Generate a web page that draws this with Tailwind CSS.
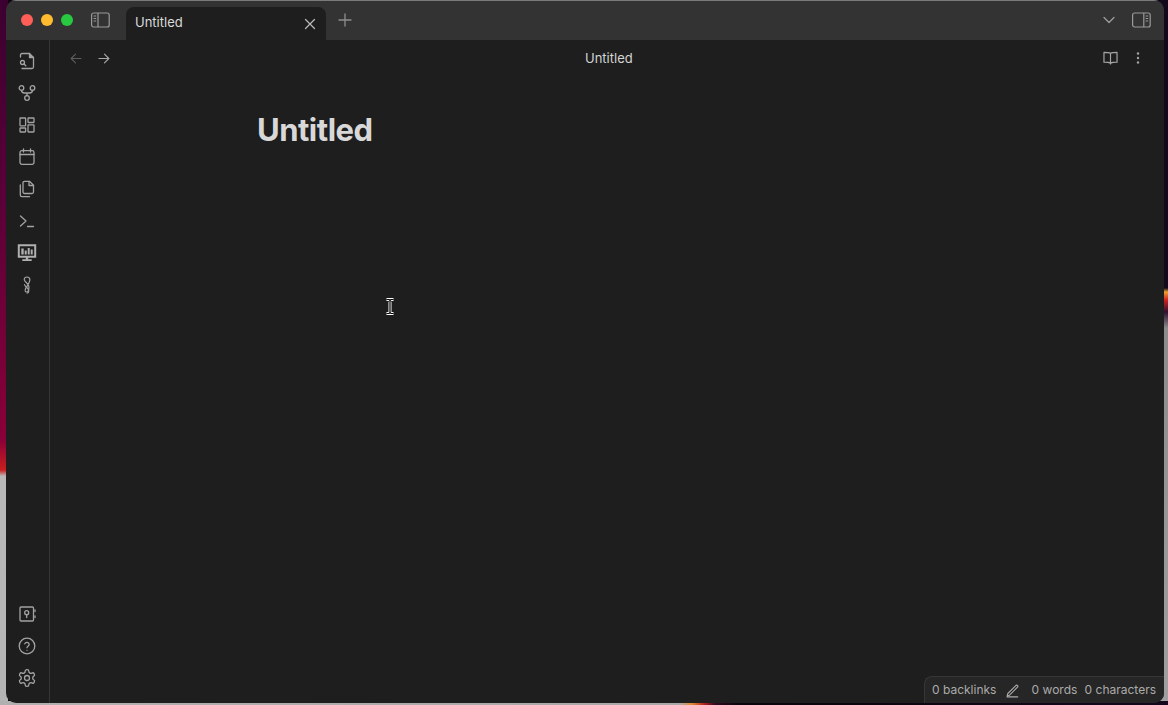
<!DOCTYPE html>
<html lang="en">
<head>
  <meta charset="UTF-8">
  <title>Untitled</title>
  <script src="https://cdn.jsdelivr.net/npm/@tailwindcss/browser@4"></script>
</head>
<body class="relative w-[1168px] h-[705px] overflow-hidden bg-[#0d0610] font-['Inter','Liberation_Sans',sans-serif]">
  <!-- wallpaper slivers around the window -->
  <div class="absolute left-0 top-0 w-[8px] h-[705px] bg-[linear-gradient(to_bottom,#3c0030_0px,#5a0038_200px,#8a0038_440px,#c81e1e_470px,#b9b9b9_476px,#b4b4b4_705px)]"></div>
  <div class="absolute right-0 top-0 w-[8px] h-[705px] bg-[linear-gradient(to_bottom,#14081c_0px,#14081c_288px,#f0a030_292px,#d02020_300px,#301030_312px,#8c8c8c_328px,#a0a0a0_705px)]"></div>
  <div class="absolute left-0 bottom-0 w-[1168px] h-[4px] bg-[linear-gradient(to_right,#b0b0b0_0px,#a8a8a8_680px,#e08a30_692px,#b01c20_705px,#300a20_715px,#08040c_740px,#14081c_1168px)]"></div>

  <!-- app window -->
  <div class="absolute left-[6px] top-0 w-[1158px] h-[703px] rounded-[10px] overflow-hidden flex flex-col bg-[#1e1e1e] text-[#dadada]">
    <!-- title bar -->
    <div class="h-[40px] shrink-0 flex bg-[#333333] border-t border-[#7a7a7a]">
      <div class="flex items-center gap-[8px] pl-[15px] w-[80px] h-[39px] pb-[1px]">
        <span class="w-[12px] h-[12px] rounded-full bg-[#ff5f57]"></span>
        <span class="w-[12px] h-[12px] rounded-full bg-[#febc2e]"></span>
        <span class="w-[12px] h-[12px] rounded-full bg-[#28c840]"></span>
      </div>
      <div class="w-[40px] h-[39px] flex items-center pb-[1px] pl-[5px]">
        <svg class="w-[19px] h-[16px] text-[#9a9a9a]" viewBox="0 0 19 16" fill="none" stroke="currentColor" stroke-width="1.2">
          <rect x="0.6" y="1" width="17.6" height="14" rx="2"/>
          <path d="M7 1v14M2.6 4h2.6M2.6 6.5h2.6M2.6 9h2.6"/>
        </svg>
      </div>
      <!-- active tab -->
      <div class="mt-[6px] w-[200px] h-[33px] bg-[#1e1e1e] rounded-t-[8px] flex items-center justify-between pl-[9px] pr-[10px]">
        <span class="text-[13px] text-[#dadada] leading-none pb-[3px]">Untitled</span>
        <svg class="w-[12px] h-[12px] text-[#bcbcbc]" viewBox="0 0 12 12" fill="none" stroke="currentColor" stroke-width="1.2" stroke-linecap="round">
          <path d="M1.500 1.500l9 9M10.500 1.500l-9 9"/>
        </svg>
      </div>
      <div class="w-[38px] h-[39px] flex items-center justify-center pb-[2px]">
        <svg class="w-[14px] h-[14px] text-[#8e8e8e]" viewBox="0 0 14 14" fill="none" stroke="currentColor" stroke-width="1.3" stroke-linecap="round">
          <path d="M7 1v12M1 7h12"/>
        </svg>
      </div>
      <div class="flex-1"></div>
      <div class="h-[39px] flex items-center pb-[1px] gap-[17px] pr-[13px]">
        <svg class="w-[12px] h-[8px] text-[#a0a0a0]" viewBox="0 0 12 8" fill="none" stroke="currentColor" stroke-width="1.2" stroke-linecap="round" stroke-linejoin="round">
          <path d="M1 1.500l5 5 5-5"/>
        </svg>
        <svg class="w-[19px] h-[16px] text-[#9a9a9a]" viewBox="0 0 19 16" fill="none" stroke="currentColor" stroke-width="1.2">
          <rect x="0.6" y="1" width="17.6" height="14" rx="2"/>
          <path d="M11.800 1v14M13.600 4h2.600M13.600 6.500h2.600M13.600 9h2.600"/>
        </svg>
      </div>
    </div>

    <div class="flex-1 flex min-h-0 relative">
      <!-- ribbon -->
      <div class="w-[44px] shrink-0 border-r border-[#363636] flex flex-col items-center justify-between pt-[11px] pb-[15px] pr-[1px] text-[#a3a3a3]">
        <div class="flex flex-col gap-[12px]">
          <svg class="w-[20px] h-[20px]" viewBox="0 0 20 20" fill="none" stroke="currentColor" stroke-width="1.3" stroke-linecap="round" stroke-linejoin="round">
            <path d="M3.500 6V4a1.500 1.500 0 0 1 1.500-1.500h7.500l4 4V16a1.500 1.500 0 0 1-1.500 1.500H5"/><path d="M12.500 2.500v4h4" fill="currentColor"/><circle cx="5.500" cy="11.500" r="2"/><path d="M7 13l1.800 1.800"/>
          </svg>
          <svg class="w-[20px] h-[20px]" viewBox="0 0 20 20" fill="none" stroke="currentColor" stroke-width="1.3" stroke-linecap="round">
            <circle cx="4.500" cy="5" r="2.300"/><circle cx="15.500" cy="5" r="2.300"/><circle cx="10" cy="15" r="2.300"/><path d="M4.500 7.300c0 2 1 2.700 3 2.700h5c2 0 3-.7 3-2.700M10 10v2.700"/>
          </svg>
          <svg class="w-[20px] h-[20px]" viewBox="0 0 20 20" fill="none" stroke="currentColor" stroke-width="1.3" stroke-linejoin="round">
            <rect x="3" y="3" width="5.600" height="7.800" rx="0.500"/><rect x="11" y="3" width="6" height="4.500" rx="0.500"/><rect x="3" y="13" width="5.600" height="4" rx="0.500"/><rect x="11" y="9.800" width="6" height="7.200" rx="0.500"/>
          </svg>
          <svg class="w-[20px] h-[20px]" viewBox="0 0 20 20" fill="none" stroke="currentColor" stroke-width="1.3" stroke-linecap="round">
            <rect x="3" y="3.600" width="14" height="13.800" rx="1.800"/><path d="M6.500 1.800v3.200M13.500 1.800v3.200M3 7.500h14"/>
          </svg>
          <svg class="w-[20px] h-[20px]" viewBox="0 0 20 20" fill="none" stroke="currentColor" stroke-width="1.3" stroke-linecap="round" stroke-linejoin="round">
            <path d="M7.500 14.500a1.500 1.500 0 0 1-1.500-1.500V3.800a1.500 1.500 0 0 1 1.500-1.500h5l4 4V13a1.500 1.500 0 0 1-1.500 1.500z"/><path d="M12 2.300v4.200h4.500"/><path d="M3.300 6v10a1.700 1.700 0 0 0 1.700 1.700h7.500"/>
          </svg>
          <svg class="w-[20px] h-[20px]" viewBox="0 0 20 20" fill="none" stroke="currentColor" stroke-width="1.3" stroke-linecap="round" stroke-linejoin="round">
            <path d="M3.500 5l5.500 5-5.500 5M10.500 15.500h6"/>
          </svg>
          <svg class="w-[20px] h-[20px] text-[#b0b0b0]" viewBox="0 0 20 20">
            <path fill="currentColor" fill-rule="evenodd" d="M0.800 1.300h18.400v13.400H11.200v1.500h3.500v1.800H5.300v-1.800h3.500v-1.500H0.800zM2.800 3.200v9.600h14.400V3.200z"/>
            <path fill="currentColor" d="M4.300 5.500h2.400v6H4.300zM7.700 7.500h2v4h-2zM10.700 5h2v6.500h-2zM13.700 6.500h2v5h-2z"/>
          </svg>
          <svg class="w-[20px] h-[20px]" viewBox="0 0 20 20" fill="none" stroke="currentColor" stroke-width="1.200" stroke-linecap="round">
            <path d="M10 2c-2 0-3 1.300-2.700 2.800.3 1.500 3.500 3.800 4.400 6 .6 1.500.3 3.200-.5 5.200-.5 1.300-2.500 1.300-3 0-.7-2 1.500-4 2.500-5.800 1-1.700 2.300-4.200 2.200-5.500C12.700 3 11.800 2 10 2z"/><path d="M7.500 9.500c.2 2 3.700 3.600 4.200 5.500.3 1.600-.5 3-1.700 3"/>
          </svg>
        </div>
        <div class="flex flex-col gap-[12px]">
          <svg class="w-[20px] h-[20px]" viewBox="0 0 20 20" fill="none" stroke="currentColor" stroke-width="1.3" stroke-linecap="round">
            <rect x="3" y="3" width="13.500" height="14" rx="1"/><circle cx="9.700" cy="8.700" r="2"/><path d="M9.700 10.700v2.800M18 6v1.500M18 12v1.500"/>
          </svg>
          <svg class="w-[20px] h-[20px]" viewBox="0 0 20 20" fill="none" stroke="currentColor" stroke-width="1.300" stroke-linecap="round" stroke-linejoin="round">
            <circle cx="10" cy="10" r="7.800"/><path d="M7.800 7.800a2.300 2.300 0 0 1 4.400.6c0 1.500-2.200 2-2.200 3.300"/><path d="M10 14.300h.01"/>
          </svg>
          <svg class="w-[20px] h-[20px]" viewBox="0 0 24 24" fill="none" stroke="currentColor" stroke-width="1.550" stroke-linecap="round" stroke-linejoin="round">
            <path d="M12.220 2h-.44a2 2 0 0 0-2 2v.18a2 2 0 0 1-1 1.730l-.43.250a2 2 0 0 1-2 0l-.15-.08a2 2 0 0 0-2.730.73l-.22.380a2 2 0 0 0 .73 2.730l.15.100a2 2 0 0 1 1 1.720v.510a2 2 0 0 1-1 1.740l-.15.090a2 2 0 0 0-.73 2.730l.22.380a2 2 0 0 0 2.730.730l.15-.080a2 2 0 0 1 2 0l.43.250a2 2 0 0 1 1 1.730V20a2 2 0 0 0 2 2h.44a2 2 0 0 0 2-2v-.18a2 2 0 0 1 1-1.730l.43-.250a2 2 0 0 1 2 0l.15.080a2 2 0 0 0 2.730-.730l.22-.390a2 2 0 0 0-.73-2.730l-.15-.080a2 2 0 0 1-1-1.740v-.500a2 2 0 0 1 1-1.740l.15-.090a2 2 0 0 0 .73-2.730l-.22-.380a2 2 0 0 0-2.730-.730l-.15.080a2 2 0 0 1-2 0l-.43-.250a2 2 0 0 1-1-1.730V4a2 2 0 0 0-2-2z"/><circle cx="12" cy="12" r="3"/>
          </svg>
        </div>
      </div>

      <!-- editor pane -->
      <div class="flex-1 min-w-0 flex flex-col">
        <div class="h-[36px] flex items-center justify-between pl-[20px] pr-[24px] relative">
          <div class="flex items-center gap-[16px]">
            <svg class="w-[12px] h-[11px] text-[#5c5c5c]" viewBox="0 0 13 12" fill="none" stroke="currentColor" stroke-width="1.200" stroke-linecap="round" stroke-linejoin="round">
              <path d="M12 6H1.500M6 1.200L1.200 6 6 10.800"/>
            </svg>
            <svg class="w-[12px] h-[11px] text-[#a8a8a8]" viewBox="0 0 13 12" fill="none" stroke="currentColor" stroke-width="1.200" stroke-linecap="round" stroke-linejoin="round">
              <path d="M1 6h10.500M7 1.200L11.800 6 7 10.800"/>
            </svg>
          </div>
          <span class="absolute left-[535px] top-[10px] text-[13px] leading-[16px] text-[#d4d4d4]">Untitled</span>
          <div class="flex items-center gap-[18px]">
            <svg class="w-[15px] h-[14px] text-[#a3a3a3]" viewBox="0 0 16 15" fill="none" stroke="currentColor" stroke-width="1.300" stroke-linejoin="round">
              <path d="M8 2.500C6.800 1.800 5.500 1.500 1 1.500v10.500c4.500 0 5.800.3 7 1 1.200-.7 2.500-1 7-1V1.500c-4.500 0-5.800.3-7 1zM8 2.500V14.500"/>
            </svg>
            <svg class="w-[4px] h-[12px] text-[#a3a3a3]" viewBox="0 0 4 12" fill="currentColor">
              <circle cx="2" cy="1.500" r="1.200"/><circle cx="2" cy="6" r="1.200"/><circle cx="2" cy="10.500" r="1.200"/>
            </svg>
          </div>
        </div>
        <div class="flex-1 pl-[207px] pt-[33px]">
          <h1 class="text-[31px] leading-[42px] font-bold tracking-[-0.5px] text-[#d8d8d8]">Untitled</h1>
        </div>
      </div>

      <!-- status bar -->
      <div class="absolute right-0 bottom-0 h-[27px] w-[240px] flex items-center pl-[7px] pr-[8px] bg-[#262626] border-t border-l border-[#363636] rounded-tl-[8px] text-[12px] text-[#ababab]">
        <span class="w-[64px] whitespace-nowrap">0 backlinks</span>
        <svg class="w-[15px] h-[15px] ml-[10px] mr-[12px]" viewBox="0 0 15 15" fill="none" stroke="currentColor" stroke-width="1.200" stroke-linecap="round" stroke-linejoin="round">
          <path d="M2 10.800L10.800 2a1.300 1.300 0 0 1 1.900 1.900L3.900 12.700 1.300 13.400zM1 14.500h12"/>
        </svg>
        <span class="w-[45px] whitespace-nowrap">0 words</span>
        <span class="ml-[8px] whitespace-nowrap">0 characters</span>
      </div>
    </div>
  </div>

  <!-- text cursor -->
  <svg class="absolute left-[385px] top-[298px] w-[10px] h-[17px]" viewBox="0 0 10 17" fill="none">
    <path d="M1.500 1.500h2.500l1 1 1-1h2.500M5 2.500v12M1.500 15.500h2.500l1-1 1 1h2.500" stroke="#ffffff" stroke-width="3"/>
    <path d="M1.500 1.500h2.500l1 1 1-1h2.500M5 2.500v12M1.500 15.500h2.500l1-1 1 1h2.500" stroke="#000000" stroke-width="1.200"/>
  </svg>
</body>
</html>
